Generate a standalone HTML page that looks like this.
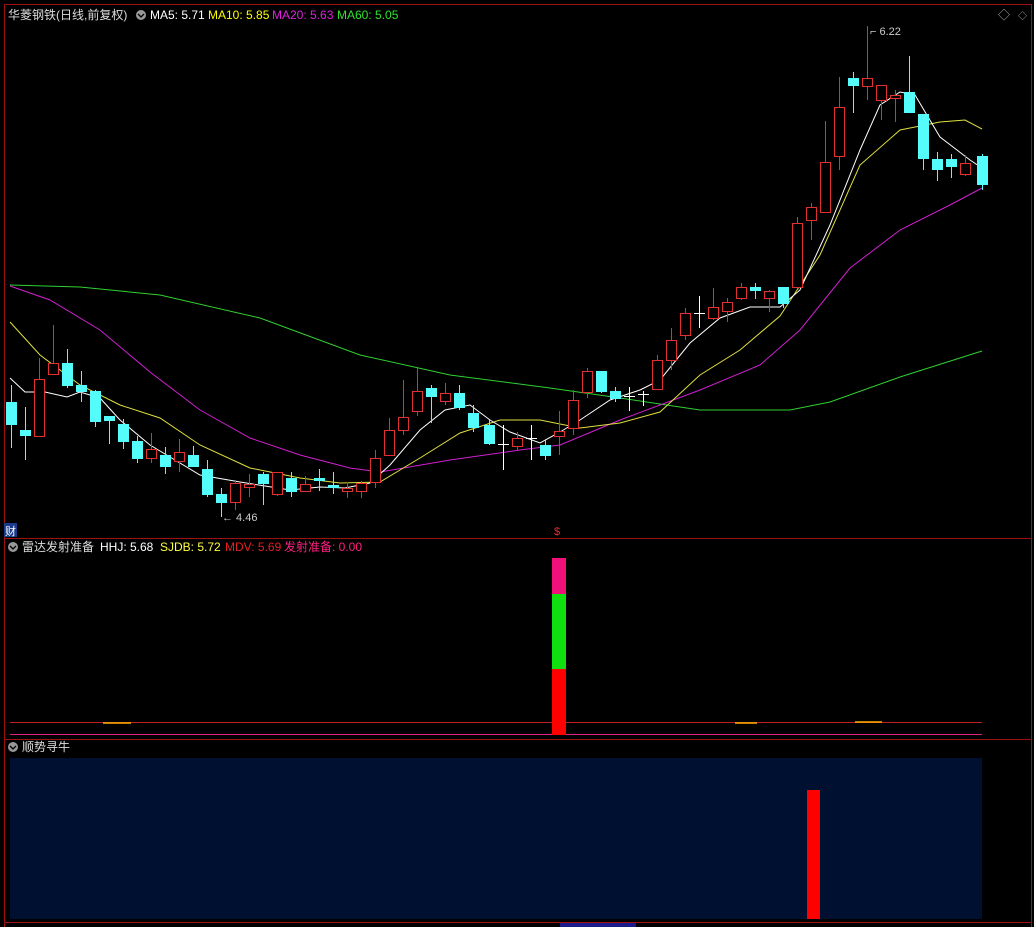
<!DOCTYPE html><html><head><meta charset="utf-8"><style>
body{margin:0;background:#000;width:1034px;height:927px;overflow:hidden;font-family:"Liberation Sans","Noto Sans CJK SC",sans-serif;}
svg{display:block}
</style></head><body>
<svg width="1034" height="927" xmlns="http://www.w3.org/2000/svg" font-family="Liberation Sans, Noto Sans CJK SC, sans-serif">
<rect width="1034" height="927" fill="#000"/>
<g stroke="#a01010" stroke-width="1" fill="none">
<line x1="4.5" y1="4" x2="4.5" y2="927"/><line x1="1031.5" y1="4" x2="1031.5" y2="927"/>
<line x1="4" y1="4.5" x2="1032" y2="4.5"/><line x1="4" y1="538.5" x2="1032" y2="538.5"/>
<line x1="4" y1="739.5" x2="1032" y2="739.5"/><line x1="4" y1="922.5" x2="1032" y2="922.5"/>
</g>
<g font-size="12">
<text x="8" y="19" fill="#ddd">华菱钢铁(日线,前复权)</text>
<circle cx="141" cy="15" r="5" fill="#999"/><path d="M138 14l3 3 3-3" stroke="#000" fill="none" stroke-width="1.3"/>
<text x="150" y="19" fill="#fff">MA5: 5.71</text>
<text x="208" y="19" fill="#ff0">MA10: 5.85</text>
<text x="272" y="19" fill="#e020e0">MA20: 5.63</text>
<text x="337" y="19" fill="#30e030">MA60: 5.05</text>
<text x="998" y="19" fill="#aaa">◇</text><text x="1018" y="19" fill="#aaa" font-size="9">◇</text>
</g>
<g fill="none" stroke-width="1">
<polyline stroke="#30d030" points="10,285 80,287 160,295 260,318 360,355 450,375 550,388 620,398 700,410 790,410 830,402 900,377 982,351"/>
<polyline stroke="#d020d0" points="10,286 50,300 100,330 150,372 200,410 250,438 300,455 350,468 380,472 450,460 520,450 560,445 620,420 700,390 760,365 800,330 850,268 900,230 950,205 982,188"/>
<polyline stroke="#e0e040" points="10,322 40,355 80,385 120,405 160,418 200,445 250,468 300,478 340,483 380,482 420,458 460,433 500,420 540,420 580,428 620,423 660,412 700,375 740,350 780,316 820,255 860,165 900,130 940,122 965,120 982,129"/>
<polyline stroke="#fff" points="10,378 25,392 45,392 67,397 80,392 100,398 120,420 150,445 200,475 240,482 265,486 290,490 320,487 345,488 370,483 390,465 420,430 445,410 470,405 490,420 510,432 540,443 560,432 580,420 610,400 640,390 660,380 690,343 720,318 750,307 780,307 800,290 830,225 860,150 880,105 900,92 915,95 940,137 970,160 982,168"/>
</g>
<g stroke="#54fcfc" fill="#54fcfc">
<line x1="11.5" y1="385" x2="11.5" y2="448"/><rect x="6.5" y="402.5" width="10" height="22"/>
<line x1="25.5" y1="407" x2="25.5" y2="460"/><rect x="20.5" y="430.5" width="10" height="5"/>
<line x1="67.5" y1="349" x2="67.5" y2="388"/><rect x="62.5" y="363.5" width="10" height="22"/>
<line x1="81.5" y1="371" x2="81.5" y2="402"/><rect x="76.5" y="385.5" width="10" height="6"/>
<line x1="95.5" y1="390" x2="95.5" y2="427"/><rect x="90.5" y="391.5" width="10" height="30"/>
<line x1="109.5" y1="416" x2="109.5" y2="444"/><rect x="104.5" y="416.5" width="10" height="4"/>
<line x1="123.5" y1="419" x2="123.5" y2="449"/><rect x="118.5" y="424.5" width="10" height="17"/>
<line x1="137.5" y1="436" x2="137.5" y2="463"/><rect x="132.5" y="441.5" width="10" height="17"/>
<line x1="165.5" y1="447" x2="165.5" y2="474"/><rect x="160.5" y="455.5" width="10" height="11"/>
<line x1="193.5" y1="446" x2="193.5" y2="466"/><rect x="188.5" y="455.5" width="10" height="11"/>
<line x1="207.5" y1="460" x2="207.5" y2="497"/><rect x="202.5" y="469.5" width="10" height="25"/>
<line x1="221.5" y1="488" x2="221.5" y2="517"/><rect x="216.5" y="494.5" width="10" height="8"/>
<line x1="263.5" y1="472" x2="263.5" y2="505"/><rect x="258.5" y="474.5" width="10" height="9"/>
<line x1="291.5" y1="472" x2="291.5" y2="497"/><rect x="286.5" y="478.5" width="10" height="13"/>
<line x1="319.5" y1="469" x2="319.5" y2="491"/><rect x="314.5" y="478.5" width="10" height="2"/>
<line x1="333.5" y1="472" x2="333.5" y2="494"/><rect x="328.5" y="485.5" width="10" height="2"/>
<line x1="431.5" y1="385" x2="431.5" y2="423"/><rect x="426.5" y="388.5" width="10" height="8"/>
<line x1="459.5" y1="385" x2="459.5" y2="410"/><rect x="454.5" y="393.5" width="10" height="14"/>
<line x1="473.5" y1="405" x2="473.5" y2="432"/><rect x="468.5" y="413.5" width="10" height="14"/>
<line x1="489.5" y1="420" x2="489.5" y2="445"/><rect x="484.5" y="425.5" width="10" height="18"/>
<line x1="545.5" y1="440" x2="545.5" y2="460"/><rect x="540.5" y="445.5" width="10" height="10"/>
<line x1="601.5" y1="371" x2="601.5" y2="393"/><rect x="596.5" y="371.5" width="10" height="20"/>
<line x1="615.5" y1="387" x2="615.5" y2="402"/><rect x="610.5" y="391.5" width="10" height="7"/>
<line x1="755.5" y1="283" x2="755.5" y2="299"/><rect x="750.5" y="287.5" width="10" height="3"/>
<line x1="783.5" y1="287" x2="783.5" y2="308"/><rect x="778.5" y="287.5" width="10" height="16"/>
<line x1="853.5" y1="72" x2="853.5" y2="113"/><rect x="848.5" y="78.5" width="10" height="7"/>
<line x1="909.5" y1="56" x2="909.5" y2="113"/><rect x="904.5" y="92.5" width="10" height="20"/>
<line x1="923.5" y1="114" x2="923.5" y2="170"/><rect x="918.5" y="114.5" width="10" height="44"/>
<line x1="937.5" y1="152" x2="937.5" y2="181"/><rect x="932.5" y="159.5" width="10" height="10"/>
<line x1="951.5" y1="154" x2="951.5" y2="178"/><rect x="946.5" y="159.5" width="10" height="7"/>
<line x1="982.5" y1="154" x2="982.5" y2="190"/><rect x="977.5" y="156.5" width="10" height="28"/>
</g>
<g stroke="#e03030" fill="#000">
<line x1="39.5" y1="358" x2="39.5" y2="437"/><rect x="34.5" y="379.5" width="10" height="57"/>
<line x1="53.5" y1="325" x2="53.5" y2="374"/><rect x="48.5" y="363.5" width="10" height="11"/>
<line x1="151.5" y1="433" x2="151.5" y2="463"/><rect x="146.5" y="449.5" width="10" height="9"/>
<line x1="179.5" y1="439" x2="179.5" y2="472"/><rect x="174.5" y="452.5" width="10" height="9"/>
<line x1="235.5" y1="480" x2="235.5" y2="510"/><rect x="230.5" y="483.5" width="10" height="19"/>
<line x1="249.5" y1="474" x2="249.5" y2="497"/><rect x="244.5" y="484.5" width="10" height="3"/>
<line x1="277.5" y1="472" x2="277.5" y2="496"/><rect x="272.5" y="472.5" width="10" height="22"/>
<line x1="305.5" y1="476" x2="305.5" y2="492"/><rect x="300.5" y="484.5" width="10" height="7"/>
<line x1="347.5" y1="482" x2="347.5" y2="498"/><rect x="342.5" y="488.5" width="10" height="3"/>
<line x1="361.5" y1="481" x2="361.5" y2="498"/><rect x="356.5" y="483.5" width="10" height="8"/>
<line x1="375.5" y1="450" x2="375.5" y2="488"/><rect x="370.5" y="458.5" width="10" height="24"/>
<line x1="389.5" y1="418" x2="389.5" y2="456"/><rect x="384.5" y="430.5" width="10" height="25"/>
<line x1="403.5" y1="380" x2="403.5" y2="435"/><rect x="398.5" y="417.5" width="10" height="13"/>
<line x1="417.5" y1="368" x2="417.5" y2="416"/><rect x="412.5" y="391.5" width="10" height="20"/>
<line x1="445.5" y1="383" x2="445.5" y2="405"/><rect x="440.5" y="393.5" width="10" height="8"/>
<line x1="517.5" y1="432" x2="517.5" y2="450"/><rect x="512.5" y="438.5" width="10" height="8"/>
<line x1="559.5" y1="411" x2="559.5" y2="455"/><rect x="554.5" y="431.5" width="10" height="5"/>
<line x1="573.5" y1="390" x2="573.5" y2="435"/><rect x="568.5" y="400.5" width="10" height="28"/>
<line x1="587.5" y1="368" x2="587.5" y2="398"/><rect x="582.5" y="371.5" width="10" height="21"/>
<line x1="657.5" y1="355" x2="657.5" y2="390"/><rect x="652.5" y="360.5" width="10" height="29"/>
<line x1="671.5" y1="328" x2="671.5" y2="370"/><rect x="666.5" y="340.5" width="10" height="20"/>
<line x1="685.5" y1="308" x2="685.5" y2="340"/><rect x="680.5" y="313.5" width="10" height="22"/>
<line x1="713.5" y1="288" x2="713.5" y2="320"/><rect x="708.5" y="307.5" width="10" height="11"/>
<line x1="727.5" y1="298" x2="727.5" y2="322"/><rect x="722.5" y="302.5" width="10" height="9"/>
<line x1="741.5" y1="283" x2="741.5" y2="300"/><rect x="736.5" y="287.5" width="10" height="11"/>
<line x1="769.5" y1="290" x2="769.5" y2="312"/><rect x="764.5" y="291.5" width="10" height="7"/>
<line x1="797.5" y1="217" x2="797.5" y2="288"/><rect x="792.5" y="223.5" width="10" height="64"/>
<line x1="811.5" y1="203" x2="811.5" y2="240"/><rect x="806.5" y="207.5" width="10" height="13"/>
<line x1="825.5" y1="121" x2="825.5" y2="213"/><rect x="820.5" y="162.5" width="10" height="50"/>
<line x1="839.5" y1="77" x2="839.5" y2="170"/><rect x="834.5" y="107.5" width="10" height="49"/>
<line x1="867.5" y1="26" x2="867.5" y2="100"/><rect x="862.5" y="78.5" width="10" height="8"/>
<line x1="881.5" y1="85" x2="881.5" y2="120"/><rect x="876.5" y="85.5" width="10" height="15"/>
<line x1="895.5" y1="90" x2="895.5" y2="122"/><rect x="890.5" y="95.5" width="10" height="3"/>
<line x1="965.5" y1="155" x2="965.5" y2="176"/><rect x="960.5" y="163.5" width="10" height="11"/>
</g>
<g stroke="#fff">
<line x1="503.5" y1="425" x2="503.5" y2="470"/><line x1="498" y1="444.5" x2="509" y2="444.5"/>
<line x1="531.5" y1="425" x2="531.5" y2="460"/><line x1="526" y1="438.5" x2="537" y2="438.5"/>
<line x1="629.5" y1="387" x2="629.5" y2="411"/><line x1="624" y1="396.5" x2="635" y2="396.5"/>
<line x1="643.5" y1="391" x2="643.5" y2="406"/><line x1="638" y1="394.5" x2="649" y2="394.5"/>
<line x1="699.5" y1="296" x2="699.5" y2="328"/><line x1="694" y1="313.5" x2="705" y2="313.5"/>
</g>
<text x="222" y="521" fill="#ccc" font-size="11">← 4.46</text>
<text x="870" y="35" fill="#ccc" font-size="11">⌐ 6.22</text>
<rect x="4" y="523" width="13" height="14" fill="#1a3a8a"/>
<text x="5" y="535" fill="#fff" font-size="11">财</text>
<text x="554" y="535" fill="#e03030" font-size="11">$</text>
<g font-size="12">
<circle cx="13" cy="547" r="5" fill="#999"/><path d="M10 546l3 3 3-3" stroke="#000" fill="none" stroke-width="1.3"/>
<text x="22" y="551" fill="#ddd">雷达发射准备</text>
<text x="100" y="551" fill="#fff">HHJ: 5.68</text>
<text x="160" y="551" fill="#ff4">SJDB: 5.72</text>
<text x="225" y="551" fill="#e02020">MDV: 5.69</text>
<text x="284" y="551" fill="#ff2080">发射准备: 0.00</text>
</g>
<line x1="10" y1="722.5" x2="982" y2="722.5" stroke="#c02020"/>
<line x1="10" y1="734.5" x2="982" y2="734.5" stroke="#e02080"/>
<g stroke="#ffb000" stroke-width="1.5"><line x1="103" y1="723" x2="131" y2="723"/><line x1="735" y1="723" x2="757" y2="723"/><line x1="855" y1="722" x2="882" y2="722"/></g>
<rect x="552" y="558" width="14" height="36" fill="#f0107a"/>
<rect x="552" y="594" width="14" height="75" fill="#10e010"/>
<rect x="552" y="669" width="14" height="66" fill="#ff0000"/>
<circle cx="13" cy="747" r="5" fill="#999"/><path d="M10 746l3 3 3-3" stroke="#000" fill="none" stroke-width="1.3"/>
<text x="22" y="751" fill="#ddd" font-size="12">顺势寻牛</text>
<rect x="10" y="758" width="972" height="161" fill="#001030"/>
<rect x="807" y="790" width="13" height="129" fill="#ff0000"/>
<rect x="560" y="923" width="76" height="5" fill="#1a1a8a"/>
</svg>
</body></html>
